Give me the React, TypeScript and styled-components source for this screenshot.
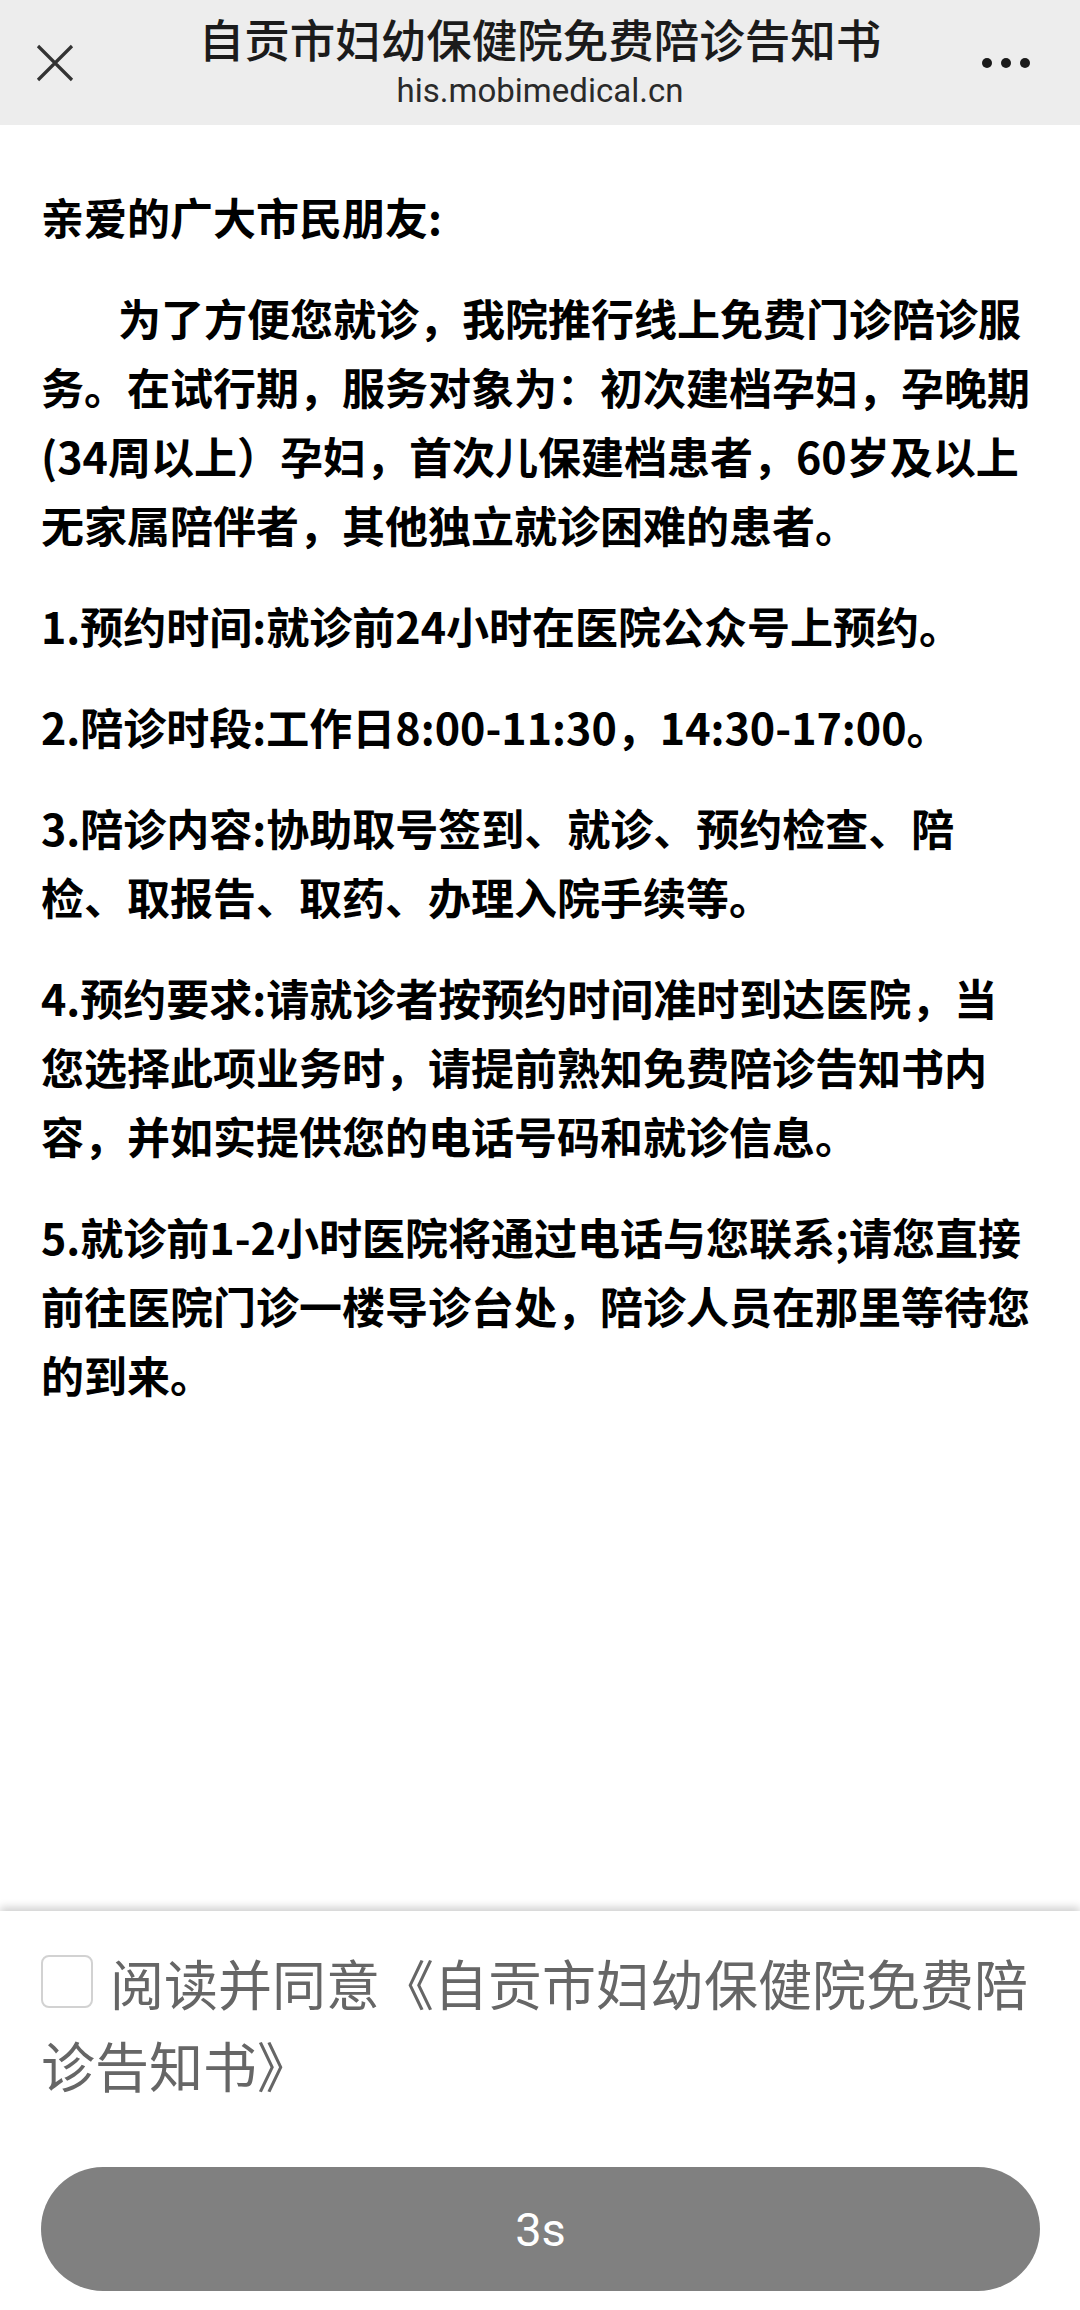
import React from 'react'
import styled, { createGlobalStyle } from 'styled-components';

const GlobalStyle = createGlobalStyle`
  * { box-sizing: border-box; }
  html, body {
    margin: 0;
    padding: 0;
    background: #ffffff;
    font-family: "Noto Sans CJK SC", "Noto Sans", sans-serif;
  }
`;

const Page = styled.div`
  width: 100%;
  min-height: 100vh;
  display: flex;
  flex-direction: column;
`;

const NavBar = styled.header`
  height: 125px;
  background: #ededed;
  display: grid;
  grid-template-columns: 110px 1fr 110px;
  align-items: center;
  flex-shrink: 0;
`;

const IconButton = styled.div<{ $align: 'left' | 'right' }>`
  display: flex;
  justify-content: ${(p) => (p.$align === 'left' ? 'flex-start' : 'flex-end')};
  padding: ${(p) => (p.$align === 'left' ? '0 0 0 35px' : '0 50px 0 0')};
  align-items: center;
  height: 100%;
`;

const TitleBlock = styled.div`
  height: 100%;
  display: flex;
  flex-direction: column;
  align-items: center;
  text-align: center;
  padding-top: 10px;
`;

const Title = styled.h1`
  margin: 0;
  font-size: 45.5px;
  font-weight: 500;
  color: #1b1b1b;
  line-height: 56px;
  white-space: nowrap;
`;

const Url = styled.div`
  font-family: Roboto, "Noto Sans", sans-serif;
  font-size: 33px;
  color: #2a2a2a;
  line-height: 34px;
  margin-top: 8px;
`;

const Dots = styled.div`
  display: flex;
  gap: 9px;
  span {
    width: 10px;
    height: 10px;
    border-radius: 50%;
    background: #1a1a1a;
  }
`;

const Content = styled.main`
  flex: 1;
  padding: 57px 46px 40px 41px;
`;

const Para = styled.p<{ $indent?: boolean }>`
  margin: 0 0 32px;
  font-size: 43px;
  line-height: 69px;
  font-weight: 700;
  color: #000;
  text-indent: ${(p) => (p.$indent ? '77px' : '0')};
`;

const Footer = styled.footer`
  flex-shrink: 0;
  height: 399px;
  padding: 31px 40px 19px 41px;
  display: flex;
  flex-direction: column;
  justify-content: space-between;
  box-shadow: 0 -4px 8px rgba(0, 0, 0, 0.18);
  background: #fff;
`;

const Agree = styled.label`
  display: block;
  font-size: 54px;
  line-height: 82px;
  color: #666;
  font-weight: 400;
`;

const Box = styled.span`
  display: inline-block;
  width: 52px;
  height: 53px;
  border: 2px solid #d2d2d2;
  border-radius: 8px;
  vertical-align: -2px;
  margin-right: 17px;
`;

const CountButton = styled.button`
  width: 100%;
  height: 124px;
  border: none;
  border-radius: 62px;
  background: #808080;
  color: #fff;
  font-family: Roboto, "Noto Sans", sans-serif;
  font-size: 47px;
  font-weight: 400;
`;

const paragraphs = [
  '1.预约时间:就诊前24小时在医院公众号上预约。',
  '2.陪诊时段:工作日8:00-11:30，14:30-17:00。',
  '3.陪诊内容:协助取号签到、就诊、预约检查、陪检、取报告、取药、办理入院手续等。',
  '4.预约要求:请就诊者按预约时间准时到达医院，当您选择此项业务时，请提前熟知免费陪诊告知书内容，并如实提供您的电话号码和就诊信息。',
  '5.就诊前1-2小时医院将通过电话与您联系;请您直接前往医院门诊一楼导诊台处，陪诊人员在那里等待您的到来。',
];

const App = () => {
  return (
    <Page>
      <GlobalStyle />
      <NavBar>
        <IconButton $align="left">
          <svg width="40" height="40" viewBox="0 0 40 40">
            <path d="M3 3 L37 37 M37 3 L3 37" stroke="#333" strokeWidth="3.2" fill="none" />
          </svg>
        </IconButton>
        <TitleBlock>
          <Title>自贡市妇幼保健院免费陪诊告知书</Title>
          <Url>his.mobimedical.cn</Url>
        </TitleBlock>
        <IconButton $align="right">
          <Dots>
            <span />
            <span />
            <span />
          </Dots>
        </IconButton>
      </NavBar>
      <Content>
        <Para>亲爱的广大市民朋友:</Para>
        <Para $indent>
          为了方便您就诊，我院推行线上免费门诊陪诊服务。在试行期，服务对象为：初次建档孕妇，孕晚期(34周以上）孕妇，首次儿保建档患者，60岁及以上无家属陪伴者，其他独立就诊困难的患者。
        </Para>
        {paragraphs.map((text) => (
          <Para key={text}>{text}</Para>
        ))}
      </Content>
      <Footer>
        <Agree>
          <Box />
          阅读并同意《自贡市妇幼保健院免费陪诊告知书》
        </Agree>
        <CountButton>3s</CountButton>
      </Footer>
    </Page>
  )
}

export default App
